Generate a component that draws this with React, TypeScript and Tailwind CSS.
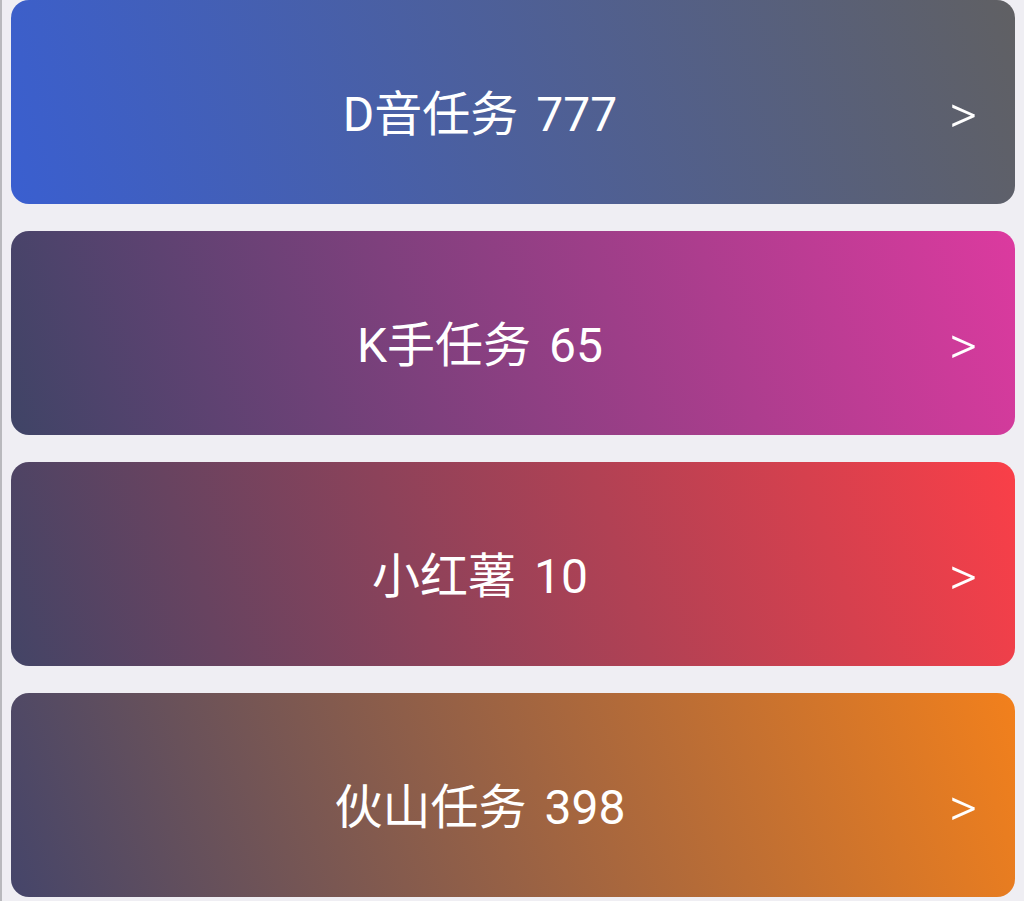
import React from 'react';

interface TaskEntry {
  id: string;
  title: string;
  count: number;
  gradient: string;
}

const TASKS: TaskEntry[] = [
  { id: 'douyin', title: 'D音任务', count: 777, gradient: 'bg-linear-[72deg] from-[#3a5fd0] to-[#606063]' },
  { id: 'kuaishou', title: 'K手任务', count: 65, gradient: 'bg-linear-[72deg] from-[#3f4466] to-[#dc3a9f]' },
  { id: 'xhs', title: '小红薯', count: 10, gradient: 'bg-linear-[72deg] from-[#434466] to-[#fa3f48]' },
  { id: 'huoshan', title: '伙山任务', count: 398, gradient: 'bg-linear-[72deg] from-[#45456a] to-[#f2801c]' },
];

const TaskCard = ({ task }: { task: TaskEntry }) => (
  <button
    className={`flex h-[204px] w-full items-center rounded-[18px] pt-[26px] text-white ${task.gradient}`}
  >
    <span className="flex-1 text-center text-[48px] leading-none">
      {task.title}
      <span className="ml-[18px]">{task.count}</span>
    </span>
    <span className="w-[66px] text-left text-[54px] font-light leading-none">&gt;</span>
  </button>
);

export default function App() {
  return (
    <div
      className="min-h-[901px] border-l-2 border-[#b9b9bd] bg-[#efeef3] pl-[9px] pr-[9px]"
      style={{ fontFamily: 'Roboto, "Noto Sans CJK SC", sans-serif' }}
    >
      <div className="flex flex-col gap-[27px]">
        {TASKS.map(task => (
          <TaskCard key={task.id} task={task} />
        ))}
      </div>
    </div>
  );
}
